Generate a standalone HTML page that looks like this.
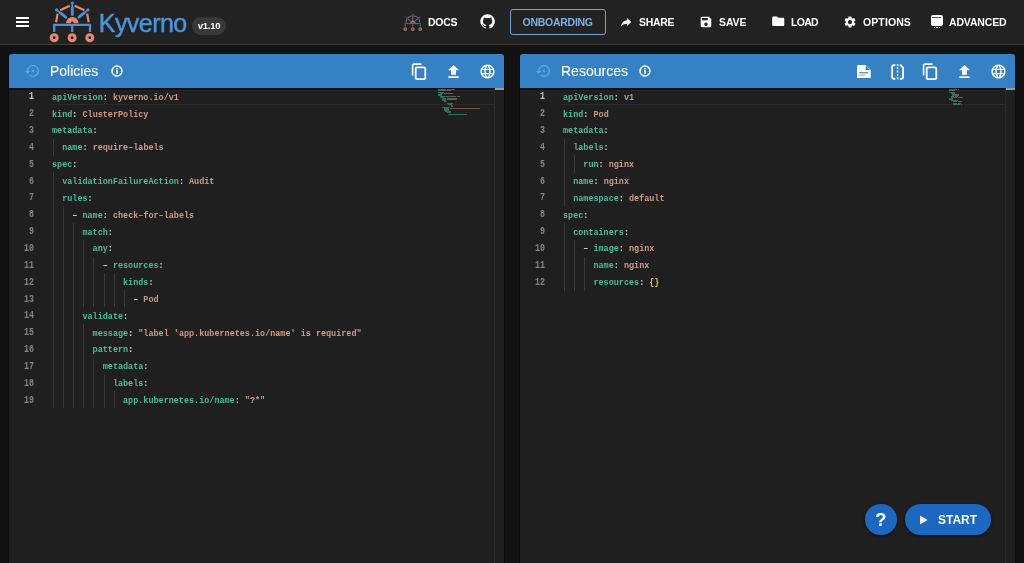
<!DOCTYPE html>
<html><head><meta charset="utf-8"><style>
*{box-sizing:border-box;margin:0;padding:0}
html,body{width:1024px;height:563px;overflow:hidden;background:#121212;font-family:"Liberation Sans",sans-serif}
.abs{position:absolute}
.hdr{position:absolute;left:0;top:0;width:1024px;height:45px;background:#222222;border-bottom:1px solid #3a3a3a}
.nav{position:absolute;top:0;height:44px;color:#fff;font-weight:bold;font-size:10.5px;letter-spacing:0.1px;line-height:44px;white-space:nowrap}
.panel{position:absolute;top:54px;height:509px;background:#1f1f1f;border-radius:3px 3px 0 0;overflow:hidden;box-shadow:0 0 0 1px #0c0c0c}
.ph{position:absolute;left:0;top:0;right:0;height:34.2px;background:#3581c4}
.sh{position:absolute;left:0;right:0;top:34.2px;height:1.4px;background:#0c0f14}
.pt{position:absolute;top:0;line-height:35px;color:#fff;font-size:14px;-webkit-text-stroke:0.1px #fff}
.sb{position:absolute;top:35px;bottom:0;width:10.5px;border-left:1px solid #2a2a2a;background:#1f1f1f}
.sbt{position:absolute;top:34.3px;height:1.7px;width:9.5px;background:#9a9a9a}
.codewrap{position:absolute;font-family:"Liberation Mono",monospace;font-weight:bold;font-size:9.8px;transform-origin:0 0;transform:scaleX(0.8630952380952381)}
.cl{height:16.855px;line-height:16.855px;white-space:pre}
.ln{position:absolute;font-family:"Liberation Mono",monospace;font-weight:bold;font-size:10.6px;color:#858585;text-align:right;width:26px;height:16.855px;line-height:16.855px;transform-origin:100% 0;transform:scaleX(0.7861635220125787)}
.ln.act{color:#c6c6c6}
.hl{border-top:1px solid #262626;border-bottom:1px solid #2b2b2b}
.g{width:1px;background:#3a3a3a}
.mm{height:1.2px;opacity:0.7}
.k2{background:#3a8f7e}.s2{background:#9a6c5a}
.k{color:#4dba9c}.s{color:#cc9a82}.p{color:#d4d4d4}.b{color:#dcc36a}
</style></head>
<body><div id="root" style="position:absolute;left:0;top:0;width:1024px;height:563px;will-change:transform">
<div class="hdr"></div>
<div class="abs" style="left:16px;top:17px;width:13px;height:2px;background:#fff"></div>
<div class="abs" style="left:16px;top:21px;width:13px;height:2px;background:#fff"></div>
<div class="abs" style="left:16px;top:25px;width:13px;height:2px;background:#fff"></div>
<svg class="abs" style="left:0;top:0" width="120" height="44"><g transform="translate(50,0) scale(1) translate(-50,0)"><line x1="56.1" y1="22.3" x2="57.6" y2="13.6" stroke="#e8876d" stroke-width="2.2" /><line x1="60.2" y1="10.3" x2="69.8" y2="5.8" stroke="#e8876d" stroke-width="2.2" /><line x1="74.6" y1="5.8" x2="84.4" y2="10.3" stroke="#e8876d" stroke-width="2.2" /><line x1="87.2" y1="13.6" x2="88.7" y2="22.3" stroke="#e8876d" stroke-width="2.2" /><path d="M66.1 23.2 A6.2 6.2 0 0 1 78.5 23.2 L73.9 23.2 A1.6 1.6 0 0 0 70.7 23.2 Z" fill="#e8876d"/><line x1="72.30" y1="2.40" x2="72.30" y2="7.78" stroke="#4a90d6" stroke-width="1.5" stroke-linecap="round"/><line x1="72.30" y1="7.78" x2="72.30" y2="14.60" stroke="#4a90d6" stroke-width="2.9" stroke-linecap="round"/><circle cx="72.30" cy="3.00" r="1.6" fill="#4a90d6"/><line x1="56.20" y1="9.60" x2="60.40" y2="12.96" stroke="#4a90d6" stroke-width="1.5" stroke-linecap="round"/><line x1="60.40" y1="12.96" x2="65.73" y2="17.23" stroke="#4a90d6" stroke-width="2.9" stroke-linecap="round"/><circle cx="56.67" cy="9.97" r="1.6" fill="#4a90d6"/><line x1="88.40" y1="9.60" x2="84.20" y2="12.96" stroke="#4a90d6" stroke-width="1.5" stroke-linecap="round"/><line x1="84.20" y1="12.96" x2="78.87" y2="17.23" stroke="#4a90d6" stroke-width="2.9" stroke-linecap="round"/><circle cx="87.93" cy="9.97" r="1.6" fill="#4a90d6"/><path d="M54.2 32 V24.8 H90 V32 M72.2 24.8 V32" stroke="#4a90d6" stroke-width="2.3" fill="none"/><circle cx="54.2" cy="37.7" r="4.5" fill="#e8876d"/><circle cx="54.2" cy="37.7" r="1.4" fill="#1a1a1a"/><circle cx="72.1" cy="37.7" r="4.5" fill="#e8876d"/><circle cx="72.1" cy="37.7" r="1.4" fill="#1a1a1a"/><circle cx="89.8" cy="37.7" r="4.5" fill="#e8876d"/><circle cx="89.8" cy="37.7" r="1.4" fill="#1a1a1a"/></g></svg>
<div class="abs" style="left:98.8px;top:7px;font-size:25px;letter-spacing:-0.55px;line-height:32px;color:#4b94dc;-webkit-text-stroke:0.45px #4b94dc">Kyverno</div>
<div class="abs" style="left:192px;top:17px;width:34px;height:18px;border-radius:9px;background:#393939;color:#fff;font-size:9.5px;letter-spacing:-0.3px;font-weight:bold;line-height:18px;text-align:center">v1.10</div>
<svg class="abs" style="left:400px;top:10px;opacity:0.75" width="24" height="24"><g transform="translate(3.5,3.2) scale(0.42) translate(-50,0)"><line x1="56.1" y1="22.3" x2="57.6" y2="13.6" stroke="#e8876d" stroke-width="2.2" /><line x1="60.2" y1="10.3" x2="69.8" y2="5.8" stroke="#e8876d" stroke-width="2.2" /><line x1="74.6" y1="5.8" x2="84.4" y2="10.3" stroke="#e8876d" stroke-width="2.2" /><line x1="87.2" y1="13.6" x2="88.7" y2="22.3" stroke="#e8876d" stroke-width="2.2" /><path d="M66.1 23.2 A6.2 6.2 0 0 1 78.5 23.2 L73.9 23.2 A1.6 1.6 0 0 0 70.7 23.2 Z" fill="#e8876d"/><line x1="72.30" y1="2.40" x2="72.30" y2="7.78" stroke="#4a90d6" stroke-width="1.5" stroke-linecap="round"/><line x1="72.30" y1="7.78" x2="72.30" y2="14.60" stroke="#4a90d6" stroke-width="2.9" stroke-linecap="round"/><circle cx="72.30" cy="3.00" r="1.6" fill="#4a90d6"/><line x1="56.20" y1="9.60" x2="60.40" y2="12.96" stroke="#4a90d6" stroke-width="1.5" stroke-linecap="round"/><line x1="60.40" y1="12.96" x2="65.73" y2="17.23" stroke="#4a90d6" stroke-width="2.9" stroke-linecap="round"/><circle cx="56.67" cy="9.97" r="1.6" fill="#4a90d6"/><line x1="88.40" y1="9.60" x2="84.20" y2="12.96" stroke="#4a90d6" stroke-width="1.5" stroke-linecap="round"/><line x1="84.20" y1="12.96" x2="78.87" y2="17.23" stroke="#4a90d6" stroke-width="2.9" stroke-linecap="round"/><circle cx="87.93" cy="9.97" r="1.6" fill="#4a90d6"/><path d="M54.2 32 V24.8 H90 V32 M72.2 24.8 V32" stroke="#4a90d6" stroke-width="2.3" fill="none"/><circle cx="54.2" cy="37.7" r="4.5" fill="#e8876d"/><circle cx="54.2" cy="37.7" r="1.4" fill="#1a1a1a"/><circle cx="72.1" cy="37.7" r="4.5" fill="#e8876d"/><circle cx="72.1" cy="37.7" r="1.4" fill="#1a1a1a"/><circle cx="89.8" cy="37.7" r="4.5" fill="#e8876d"/><circle cx="89.8" cy="37.7" r="1.4" fill="#1a1a1a"/></g></svg>
<div class="nav" style="left:428px;letter-spacing:-0.3px">DOCS</div>
<svg class="abs" style="left:480px;top:13.8px;opacity:1" width="15.2" height="15.2" viewBox="0 0 24 24"><path fill="#fff" d="M12 .5C5.65.5.5 5.65.5 12c0 5.08 3.29 9.39 7.86 10.91.58.1.79-.25.79-.56v-2c-3.2.7-3.87-1.37-3.87-1.37-.53-1.33-1.28-1.69-1.28-1.69-1.04-.71.08-.7.08-.7 1.16.08 1.77 1.19 1.77 1.19 1.03 1.76 2.69 1.25 3.35.96.1-.74.4-1.25.73-1.54-2.55-.29-5.24-1.28-5.24-5.68 0-1.25.45-2.28 1.18-3.08-.12-.29-.51-1.46.11-3.04 0 0 .97-.31 3.17 1.18.92-.26 1.9-.38 2.88-.39.98.01 1.96.13 2.88.39 2.2-1.49 3.17-1.18 3.17-1.18.63 1.58.23 2.75.11 3.04.74.8 1.18 1.83 1.18 3.08 0 4.41-2.69 5.38-5.25 5.67.41.36.78 1.06.78 2.14v3.17c0 .31.21.67.8.56C20.21 21.39 23.5 17.08 23.5 12 23.5 5.65 18.35.5 12 .5z"/></svg>
<div class="abs" style="left:510px;top:9px;width:96px;height:25.5px;border:1.8px solid #74a3d8;border-radius:3px"></div>
<div class="nav" style="left:522.6px;color:#79b0e6;letter-spacing:-0.28px">ONBOARDING</div>
<svg class="abs" style="left:619px;top:15px;opacity:1" width="14" height="14" viewBox="0 0 24 24"><path fill="#fff" d="M14 9V5l7 7-7 7v-4.1c-5 0-8.5 1.6-11 5.1 1-5 4-10 11-11z"/></svg>
<div class="nav" style="left:639px;letter-spacing:-0.3px">SHARE</div>
<svg class="abs" style="left:699px;top:15px;opacity:1" width="14" height="14" viewBox="0 0 24 24"><path fill="#fff" d="M17 3H5c-1.11 0-2 .9-2 2v14c0 1.1.89 2 2 2h14c1.1 0 2-.9 2-2V7l-4-4zm-5 16c-1.66 0-3-1.34-3-3s1.34-3 3-3 3 1.34 3 3-1.34 3-3 3zm3-10H5V5h10v4z"/></svg>
<div class="nav" style="left:719px;letter-spacing:-0.1px">SAVE</div>
<svg class="abs" style="left:770.5px;top:14.3px;opacity:1" width="14.5" height="14.5" viewBox="0 0 24 24"><path fill="#fff" d="M10 4H4c-1.1 0-1.99.9-1.99 2L2 18c0 1.1.9 2 2 2h16c1.1 0 2-.9 2-2V8c0-1.1-.9-2-2-2h-8l-2-2z"/></svg>
<div class="nav" style="left:791px;letter-spacing:-0.7px">LOAD</div>
<svg class="abs" style="left:843px;top:14.5px;opacity:1" width="14" height="14" viewBox="0 0 24 24"><path fill="#fff" d="M19.14 12.94c.04-.3.06-.61.06-.94 0-.32-.02-.64-.07-.94l2.03-1.58c.18-.14.23-.41.12-.61l-1.92-3.32c-.12-.22-.37-.29-.59-.22l-2.39.96c-.5-.38-1.03-.7-1.62-.94l-.36-2.54c-.04-.24-.24-.41-.48-.41h-3.84c-.24 0-.43.17-.47.41l-.36 2.54c-.59.24-1.130.57-1.62.94l-2.39-.96c-.22-.08-.47 0-.59.22L2.74 8.87c-.12.21-.08.47.12.61l2.03 1.58c-.05.3-.09.63-.09.94s.02.64.07.94l-2.03 1.58c-.18.14-.23.41-.12.61l1.92 3.32c.12.22.37.29.59.22l2.39-.96c.5.38 1.03.7 1.62.94l.36 2.54c.05.24.24.41.48.41h3.84c.24 0 .44-.17.47-.41l.36-2.54c.59-.24 1.13-.56 1.62-.94l2.39.96c.22.08.47 0 .59-.22l1.92-3.32c.12-.22.07-.47-.12-.61l-2.01-1.58zM12 15.6c-1.98 0-3.6-1.62-3.6-3.6s1.62-3.6 3.6-3.6 3.6 1.62 3.6 3.6-1.62 3.6-3.6 3.6z"/></svg>
<div class="nav" style="left:863px;letter-spacing:0.1px">OPTIONS</div>
<div class="abs" style="left:930.5px;top:15px;width:12px;height:10.6px;background:#fff;border-radius:2px"></div>
<div class="abs" style="left:932px;top:16.8px;width:9px;height:1.2px;background:#555"></div>
<div class="abs" style="left:933.8px;top:26.6px;width:1.4px;height:1.2px;background:#ddd"></div>
<div class="abs" style="left:936.3px;top:26.6px;width:1.4px;height:1.2px;background:#ddd"></div>
<div class="abs" style="left:938.8px;top:26.6px;width:1.4px;height:1.2px;background:#ddd"></div>
<div class="nav" style="left:949px;letter-spacing:-0.15px">ADVANCED</div>
<div class="panel" style="left:9px;width:495px">
<div class="ph"></div><div class="sh"></div>
<div class="pt" style="left:41px">Policies</div>
<div class="sb" style="left:484.5px"></div><div class="sbt" style="left:485.5px"></div>
</div>
<svg class="abs" style="left:24.8px;top:62.6px;opacity:0.9" width="16" height="16" viewBox="0 0 24 24"><path fill="#67aced" d="M14 12c0-1.1-.9-2-2-2s-2 .9-2 2 .9 2 2 2 2-.9 2-2zm-2-9c-4.97 0-9 4.03-9 9H0l4 4 4-4H5c0-3.87 3.13-7 7-7s7 3.13 7 7-3.13 7-7 7c-1.51 0-2.910-.49-4.06-1.3l-1.42 1.44C8.04 20.3 9.94 21 12 21c4.97 0 9-4.03 9-9s-4.03-9-9-9z"/></svg>
<svg class="abs" style="left:110.7px;top:64.9px" width="12" height="12" viewBox="0 0 12 12"><circle cx="6" cy="6" r="5" fill="none" stroke="#fff" stroke-width="1.5"/><rect x="5.25" y="5" width="1.5" height="3.8" fill="#fff"/><rect x="5.25" y="3" width="1.5" height="1.4" fill="#fff"/></svg>
<svg class="abs" style="left:411.3px;top:62.8px" width="16" height="17" viewBox="0 0 16 17"><path d="M1.6 12.6V2.6Q1.6 1.1 3.1 1.1H10.5" fill="none" stroke="#fff" stroke-width="1.6"/><rect x="4.7" y="4.3" width="9.6" height="11.9" rx="1.5" fill="none" stroke="#fff" stroke-width="1.8"/></svg>
<svg class="abs" style="left:448.0px;top:64.5px" width="11" height="13.5" viewBox="0 0 11 13.5"><path d="M5.5 0L11 5.3H8V9.8H3V5.3H0Z" fill="#fff"/><rect x="0.3" y="11.3" width="10.4" height="2" fill="#fff"/></svg>
<svg class="abs" style="left:478.5px;top:63px;opacity:1" width="17" height="17" viewBox="0 0 24 24"><path fill="#fff" d="M11.99 2C6.47 2 2 6.48 2 12s4.47 10 9.99 10C17.52 22 22 17.520 22 12S17.52 2 11.99 2zm6.93 6h-2.95c-.32-1.25-.78-2.45-1.38-3.56 1.84.63 3.37 1.91 4.33 3.56zM12 4.04c.83 1.2 1.48 2.53 1.91 3.96h-3.82c.43-1.43 1.08-2.76 1.91-3.96zM4.26 14C4.1 13.36 4 12.69 4 12s.1-1.36.26-2h3.38c-.08.66-.14 1.32-.14 2 0 .68.06 1.34.14 2H4.26zm.82 2h2.95c.32 1.25.78 2.45 1.38 3.56-1.84-.63-3.37-1.9-4.330-3.56zm2.95-8H5.08c.96-1.66 2.49-2.93 4.33-3.56C8.81 5.55 8.35 6.75 8.03 8zM12 19.96c-.83-1.2-1.48-2.53-1.91-3.96h3.82c-.43 1.43-1.08 2.76-1.91 3.96zM14.34 14H9.66c-.09-.66-.16-1.32-.16-2 0-.68.07-1.35.16-2h4.68c.09.65.16 1.32.16 2 0 .68-.07 1.34-.16 2zm.25 5.56c.6-1.11 1.06-2.31 1.38-3.56h2.95c-.96 1.65-2.49 2.93-4.33 3.56zM16.36 14c.08-.66.14-1.32.14-2 0-.68-.06-1.34-.14-2h3.38c.16.64.26 1.31.26 2s-.1 1.36-.26 2h-3.38z"/></svg>
<div class="abs hl" style="left:50.3px;top:89.8px;width:443.7px;height:15.4px"></div>
<div class="abs g" style="left:52.80px;top:138.51px;height:17.16px"></div>
<div class="abs g" style="left:52.80px;top:172.23px;height:17.16px"></div>
<div class="abs g" style="left:52.80px;top:189.08px;height:17.16px"></div>
<div class="abs g" style="left:52.80px;top:205.94px;height:17.16px"></div>
<div class="abs g" style="left:62.95px;top:205.94px;height:17.16px"></div>
<div class="abs g" style="left:52.80px;top:222.79px;height:17.16px"></div>
<div class="abs g" style="left:62.95px;top:222.79px;height:17.16px"></div>
<div class="abs g" style="left:73.10px;top:222.79px;height:17.16px"></div>
<div class="abs g" style="left:52.80px;top:239.64px;height:17.16px"></div>
<div class="abs g" style="left:62.95px;top:239.64px;height:17.16px"></div>
<div class="abs g" style="left:73.10px;top:239.64px;height:17.16px"></div>
<div class="abs g" style="left:83.25px;top:239.64px;height:17.16px"></div>
<div class="abs g" style="left:52.80px;top:256.50px;height:17.16px"></div>
<div class="abs g" style="left:62.95px;top:256.50px;height:17.16px"></div>
<div class="abs g" style="left:73.10px;top:256.50px;height:17.16px"></div>
<div class="abs g" style="left:83.25px;top:256.50px;height:17.16px"></div>
<div class="abs g" style="left:93.40px;top:256.50px;height:17.16px"></div>
<div class="abs g" style="left:52.80px;top:273.36px;height:17.16px"></div>
<div class="abs g" style="left:62.95px;top:273.36px;height:17.16px"></div>
<div class="abs g" style="left:73.10px;top:273.36px;height:17.16px"></div>
<div class="abs g" style="left:83.25px;top:273.36px;height:17.16px"></div>
<div class="abs g" style="left:93.40px;top:273.36px;height:17.16px"></div>
<div class="abs g" style="left:103.55px;top:273.36px;height:17.16px"></div>
<div class="abs g" style="left:113.70px;top:273.36px;height:17.16px"></div>
<div class="abs g" style="left:52.80px;top:290.21px;height:17.16px"></div>
<div class="abs g" style="left:62.95px;top:290.21px;height:17.16px"></div>
<div class="abs g" style="left:73.10px;top:290.21px;height:17.16px"></div>
<div class="abs g" style="left:83.25px;top:290.21px;height:17.16px"></div>
<div class="abs g" style="left:93.40px;top:290.21px;height:17.16px"></div>
<div class="abs g" style="left:103.55px;top:290.21px;height:17.16px"></div>
<div class="abs g" style="left:113.70px;top:290.21px;height:17.16px"></div>
<div class="abs g" style="left:123.85px;top:290.21px;height:17.16px"></div>
<div class="abs g" style="left:52.80px;top:307.06px;height:17.16px"></div>
<div class="abs g" style="left:62.95px;top:307.06px;height:17.16px"></div>
<div class="abs g" style="left:73.10px;top:307.06px;height:17.16px"></div>
<div class="abs g" style="left:52.80px;top:323.92px;height:17.16px"></div>
<div class="abs g" style="left:62.95px;top:323.92px;height:17.16px"></div>
<div class="abs g" style="left:73.10px;top:323.92px;height:17.16px"></div>
<div class="abs g" style="left:83.25px;top:323.92px;height:17.16px"></div>
<div class="abs g" style="left:52.80px;top:340.78px;height:17.16px"></div>
<div class="abs g" style="left:62.95px;top:340.78px;height:17.16px"></div>
<div class="abs g" style="left:73.10px;top:340.78px;height:17.16px"></div>
<div class="abs g" style="left:83.25px;top:340.78px;height:17.16px"></div>
<div class="abs g" style="left:52.80px;top:357.63px;height:17.16px"></div>
<div class="abs g" style="left:62.95px;top:357.63px;height:17.16px"></div>
<div class="abs g" style="left:73.10px;top:357.63px;height:17.16px"></div>
<div class="abs g" style="left:83.25px;top:357.63px;height:17.16px"></div>
<div class="abs g" style="left:93.40px;top:357.63px;height:17.16px"></div>
<div class="abs g" style="left:52.80px;top:374.49px;height:17.16px"></div>
<div class="abs g" style="left:62.95px;top:374.49px;height:17.16px"></div>
<div class="abs g" style="left:73.10px;top:374.49px;height:17.16px"></div>
<div class="abs g" style="left:83.25px;top:374.49px;height:17.16px"></div>
<div class="abs g" style="left:93.40px;top:374.49px;height:17.16px"></div>
<div class="abs g" style="left:103.55px;top:374.49px;height:17.16px"></div>
<div class="abs g" style="left:52.80px;top:391.34px;height:17.16px"></div>
<div class="abs g" style="left:62.95px;top:391.34px;height:17.16px"></div>
<div class="abs g" style="left:73.10px;top:391.34px;height:17.16px"></div>
<div class="abs g" style="left:83.25px;top:391.34px;height:17.16px"></div>
<div class="abs g" style="left:93.40px;top:391.34px;height:17.16px"></div>
<div class="abs g" style="left:103.55px;top:391.34px;height:17.16px"></div>
<div class="abs g" style="left:113.70px;top:391.34px;height:17.16px"></div>
<div class="ln act" style="left:8.4px;top:88.25px">1</div>
<div class="ln" style="left:8.4px;top:105.11px">2</div>
<div class="ln" style="left:8.4px;top:121.96px">3</div>
<div class="ln" style="left:8.4px;top:138.81px">4</div>
<div class="ln" style="left:8.4px;top:155.67px">5</div>
<div class="ln" style="left:8.4px;top:172.53px">6</div>
<div class="ln" style="left:8.4px;top:189.38px">7</div>
<div class="ln" style="left:8.4px;top:206.24px">8</div>
<div class="ln" style="left:8.4px;top:223.09px">9</div>
<div class="ln" style="left:8.4px;top:239.94px">10</div>
<div class="ln" style="left:8.4px;top:256.80px">11</div>
<div class="ln" style="left:8.4px;top:273.66px">12</div>
<div class="ln" style="left:8.4px;top:290.51px">13</div>
<div class="ln" style="left:8.4px;top:307.37px">14</div>
<div class="ln" style="left:8.4px;top:324.22px">15</div>
<div class="ln" style="left:8.4px;top:341.08px">16</div>
<div class="ln" style="left:8.4px;top:357.93px">17</div>
<div class="ln" style="left:8.4px;top:374.79px">18</div>
<div class="ln" style="left:8.4px;top:391.64px">19</div>
<div class="codewrap" style="left:52.30px;top:89.75px">
<div class="cl"><span class="k">apiVersion</span><span class="p">:</span> <span class="s">kyverno.io/v1</span></div>
<div class="cl"><span class="k">kind</span><span class="p">:</span> <span class="s">ClusterPolicy</span></div>
<div class="cl"><span class="k">metadata</span><span class="p">:</span></div>
<div class="cl">  <span class="k">name</span><span class="p">:</span> <span class="s">require–labels</span></div>
<div class="cl"><span class="k">spec</span><span class="p">:</span></div>
<div class="cl">  <span class="k">validationFailureAction</span><span class="p">:</span> <span class="s">Audit</span></div>
<div class="cl">  <span class="k">rules</span><span class="p">:</span></div>
<div class="cl">    <span class="p">– </span><span class="k">name</span><span class="p">:</span> <span class="s">check–for–labels</span></div>
<div class="cl">      <span class="k">match</span><span class="p">:</span></div>
<div class="cl">        <span class="k">any</span><span class="p">:</span></div>
<div class="cl">          <span class="p">– </span><span class="k">resources</span><span class="p">:</span></div>
<div class="cl">              <span class="k">kinds</span><span class="p">:</span></div>
<div class="cl">                <span class="p">– </span><span class="s">Pod</span></div>
<div class="cl">      <span class="k">validate</span><span class="p">:</span></div>
<div class="cl">        <span class="k">message</span><span class="p">:</span> <span class="s">&quot;label &#x27;app.kubernetes.io/name&#x27; is required&quot;</span></div>
<div class="cl">        <span class="k">pattern</span><span class="p">:</span></div>
<div class="cl">          <span class="k">metadata</span><span class="p">:</span></div>
<div class="cl">            <span class="k">labels</span><span class="p">:</span></div>
<div class="cl">              <span class="k">app.kubernetes.io/name</span><span class="p">:</span> <span class="s">&quot;?*&quot;</span></div>
</div>
<div class="abs mm k2" style="left:438.30px;top:88.90px;width:7.52px"></div>
<div class="abs mm s2" style="left:446.51px;top:88.90px;width:8.89px"></div>
<div class="abs mm k2" style="left:438.30px;top:90.27px;width:3.42px"></div>
<div class="abs mm s2" style="left:442.40px;top:90.27px;width:8.89px"></div>
<div class="abs mm k2" style="left:438.30px;top:91.64px;width:6.16px"></div>
<div class="abs mm k2" style="left:439.67px;top:93.01px;width:3.42px"></div>
<div class="abs mm s2" style="left:443.77px;top:93.01px;width:9.58px"></div>
<div class="abs mm k2" style="left:438.30px;top:94.38px;width:3.42px"></div>
<div class="abs mm k2" style="left:439.67px;top:95.75px;width:16.42px"></div>
<div class="abs mm s2" style="left:456.77px;top:95.75px;width:3.42px"></div>
<div class="abs mm k2" style="left:439.67px;top:97.12px;width:4.10px"></div>
<div class="abs mm k2" style="left:442.40px;top:98.49px;width:3.42px"></div>
<div class="abs mm s2" style="left:446.51px;top:98.49px;width:10.94px"></div>
<div class="abs mm k2" style="left:442.40px;top:99.86px;width:4.10px"></div>
<div class="abs mm k2" style="left:443.77px;top:101.23px;width:2.74px"></div>
<div class="abs mm k2" style="left:446.51px;top:102.60px;width:6.84px"></div>
<div class="abs mm k2" style="left:447.88px;top:103.97px;width:4.10px"></div>
<div class="abs mm s2" style="left:450.61px;top:105.34px;width:2.05px"></div>
<div class="abs mm k2" style="left:442.40px;top:106.71px;width:6.16px"></div>
<div class="abs mm k2" style="left:443.77px;top:108.08px;width:5.47px"></div>
<div class="abs mm s2" style="left:449.93px;top:108.08px;width:30.10px"></div>
<div class="abs mm k2" style="left:443.77px;top:109.45px;width:5.47px"></div>
<div class="abs mm k2" style="left:445.14px;top:110.82px;width:6.16px"></div>
<div class="abs mm k2" style="left:446.51px;top:112.19px;width:4.79px"></div>
<div class="abs mm k2" style="left:447.88px;top:113.56px;width:15.73px"></div>
<div class="abs mm s2" style="left:464.29px;top:113.56px;width:2.74px"></div>
<div class="panel" style="left:520px;width:495px">
<div class="ph"></div><div class="sh"></div>
<div class="pt" style="left:41px">Resources</div>
<div class="sb" style="left:484.5px"></div><div class="sbt" style="left:485.5px"></div>
</div>
<svg class="abs" style="left:535.8px;top:62.6px;opacity:0.9" width="16" height="16" viewBox="0 0 24 24"><path fill="#67aced" d="M14 12c0-1.1-.9-2-2-2s-2 .9-2 2 .9 2 2 2 2-.9 2-2zm-2-9c-4.97 0-9 4.03-9 9H0l4 4 4-4H5c0-3.87 3.13-7 7-7s7 3.13 7 7-3.13 7-7 7c-1.51 0-2.910-.49-4.06-1.3l-1.42 1.44C8.04 20.3 9.94 21 12 21c4.97 0 9-4.03 9-9s-4.03-9-9-9z"/></svg>
<svg class="abs" style="left:638.7px;top:64.9px" width="12" height="12" viewBox="0 0 12 12"><circle cx="6" cy="6" r="5" fill="none" stroke="#fff" stroke-width="1.5"/><rect x="5.25" y="5" width="1.5" height="3.8" fill="#fff"/><rect x="5.25" y="3" width="1.5" height="1.4" fill="#fff"/></svg>
<svg class="abs" style="left:856.6px;top:64.6px" width="14" height="13.6" viewBox="0 0 14 13.6"><path d="M1.4 0H8.6L13.7 5.1V12.2Q13.7 13.4 12.4 13.4H1.4Q0 13.4 0 12V1.4Q0 0 1.4 0Z" fill="#fff"/><path d="M8.6 0.6V5.1H13.1Z" fill="#3581c4"/><rect x="2.2" y="7.3" width="9" height="1" fill="#3d6a98"/><rect x="2.2" y="9.6" width="6" height="1" fill="#8ea6c0"/></svg>
<svg class="abs" style="left:890.6px;top:63.6px" width="13.2" height="16" viewBox="0 0 14 16" preserveAspectRatio="none"><path d="M4.6 1.3H2.6Q1.2 1.3 1.2 2.7V13.3Q1.2 14.7 2.6 14.7H4.6M9.4 1.3H10.4L12.8 3.7V13.3Q12.8 14.7 11.4 14.7H9.4" fill="none" stroke="#fff" stroke-width="1.9"/><path d="M7 0V16" stroke="#fff" stroke-width="1.6" stroke-dasharray="2 1.3"/></svg>
<svg class="abs" style="left:922.3px;top:62.8px" width="16" height="17" viewBox="0 0 16 17"><path d="M1.6 12.6V2.6Q1.6 1.1 3.1 1.1H10.5" fill="none" stroke="#fff" stroke-width="1.6"/><rect x="4.7" y="4.3" width="9.6" height="11.9" rx="1.5" fill="none" stroke="#fff" stroke-width="1.8"/></svg>
<svg class="abs" style="left:959.0px;top:64.5px" width="11" height="13.5" viewBox="0 0 11 13.5"><path d="M5.5 0L11 5.3H8V9.8H3V5.3H0Z" fill="#fff"/><rect x="0.3" y="11.3" width="10.4" height="2" fill="#fff"/></svg>
<svg class="abs" style="left:989.5px;top:63px;opacity:1" width="17" height="17" viewBox="0 0 24 24"><path fill="#fff" d="M11.99 2C6.47 2 2 6.48 2 12s4.47 10 9.99 10C17.52 22 22 17.520 22 12S17.52 2 11.99 2zm6.93 6h-2.95c-.32-1.25-.78-2.45-1.38-3.56 1.84.63 3.37 1.91 4.33 3.56zM12 4.04c.83 1.2 1.48 2.53 1.91 3.96h-3.82c.43-1.43 1.08-2.76 1.91-3.96zM4.26 14C4.1 13.36 4 12.69 4 12s.1-1.36.26-2h3.38c-.08.66-.14 1.32-.14 2 0 .68.06 1.34.14 2H4.26zm.82 2h2.95c.32 1.25.78 2.45 1.38 3.56-1.84-.63-3.37-1.9-4.330-3.56zm2.95-8H5.08c.96-1.66 2.49-2.93 4.33-3.56C8.81 5.55 8.35 6.75 8.03 8zM12 19.96c-.83-1.2-1.48-2.53-1.91-3.96h3.82c-.43 1.43-1.08 2.76-1.91 3.96zM14.34 14H9.66c-.09-.66-.16-1.32-.16-2 0-.68.07-1.35.16-2h4.68c.09.65.16 1.32.16 2 0 .68-.07 1.34-.16 2zm.25 5.56c.6-1.11 1.06-2.31 1.38-3.56h2.95c-.96 1.65-2.49 2.93-4.33 3.56zM16.36 14c.08-.66.14-1.32.14-2 0-.68-.06-1.34-.14-2h3.38c.16.64.26 1.31.26 2s-.1 1.36-.26 2h-3.38z"/></svg>
<div class="abs hl" style="left:561.3px;top:89.8px;width:443.7px;height:15.4px"></div>
<div class="abs g" style="left:563.80px;top:138.51px;height:17.16px"></div>
<div class="abs g" style="left:563.80px;top:155.37px;height:17.16px"></div>
<div class="abs g" style="left:573.95px;top:155.37px;height:17.16px"></div>
<div class="abs g" style="left:563.80px;top:172.23px;height:17.16px"></div>
<div class="abs g" style="left:563.80px;top:189.08px;height:17.16px"></div>
<div class="abs g" style="left:563.80px;top:222.79px;height:17.16px"></div>
<div class="abs g" style="left:563.80px;top:239.64px;height:17.16px"></div>
<div class="abs g" style="left:573.95px;top:239.64px;height:17.16px"></div>
<div class="abs g" style="left:563.80px;top:256.50px;height:17.16px"></div>
<div class="abs g" style="left:573.95px;top:256.50px;height:17.16px"></div>
<div class="abs g" style="left:584.10px;top:256.50px;height:17.16px"></div>
<div class="abs g" style="left:563.80px;top:273.36px;height:17.16px"></div>
<div class="abs g" style="left:573.95px;top:273.36px;height:17.16px"></div>
<div class="abs g" style="left:584.10px;top:273.36px;height:17.16px"></div>
<div class="ln act" style="left:519.4px;top:88.25px">1</div>
<div class="ln" style="left:519.4px;top:105.11px">2</div>
<div class="ln" style="left:519.4px;top:121.96px">3</div>
<div class="ln" style="left:519.4px;top:138.81px">4</div>
<div class="ln" style="left:519.4px;top:155.67px">5</div>
<div class="ln" style="left:519.4px;top:172.53px">6</div>
<div class="ln" style="left:519.4px;top:189.38px">7</div>
<div class="ln" style="left:519.4px;top:206.24px">8</div>
<div class="ln" style="left:519.4px;top:223.09px">9</div>
<div class="ln" style="left:519.4px;top:239.94px">10</div>
<div class="ln" style="left:519.4px;top:256.80px">11</div>
<div class="ln" style="left:519.4px;top:273.66px">12</div>
<div class="codewrap" style="left:563.30px;top:89.75px">
<div class="cl"><span class="k">apiVersion</span><span class="p">:</span> <span class="s">v1</span></div>
<div class="cl"><span class="k">kind</span><span class="p">:</span> <span class="s">Pod</span></div>
<div class="cl"><span class="k">metadata</span><span class="p">:</span></div>
<div class="cl">  <span class="k">labels</span><span class="p">:</span></div>
<div class="cl">    <span class="k">run</span><span class="p">:</span> <span class="s">nginx</span></div>
<div class="cl">  <span class="k">name</span><span class="p">:</span> <span class="s">nginx</span></div>
<div class="cl">  <span class="k">namespace</span><span class="p">:</span> <span class="s">default</span></div>
<div class="cl"><span class="k">spec</span><span class="p">:</span></div>
<div class="cl">  <span class="k">containers</span><span class="p">:</span></div>
<div class="cl">    <span class="p">– </span><span class="k">image</span><span class="p">:</span> <span class="s">nginx</span></div>
<div class="cl">      <span class="k">name</span><span class="p">:</span> <span class="s">nginx</span></div>
<div class="cl">      <span class="k">resources</span><span class="p">:</span> <span class="b">{}</span></div>
</div>
<div class="abs mm k2" style="left:949.30px;top:88.90px;width:7.52px"></div>
<div class="abs mm s2" style="left:957.51px;top:88.90px;width:1.37px"></div>
<div class="abs mm k2" style="left:949.30px;top:90.27px;width:3.42px"></div>
<div class="abs mm s2" style="left:953.40px;top:90.27px;width:2.05px"></div>
<div class="abs mm k2" style="left:949.30px;top:91.64px;width:6.16px"></div>
<div class="abs mm k2" style="left:950.67px;top:93.01px;width:4.79px"></div>
<div class="abs mm k2" style="left:952.04px;top:94.38px;width:2.74px"></div>
<div class="abs mm s2" style="left:955.46px;top:94.38px;width:3.42px"></div>
<div class="abs mm k2" style="left:950.67px;top:95.75px;width:3.42px"></div>
<div class="abs mm s2" style="left:954.77px;top:95.75px;width:3.42px"></div>
<div class="abs mm k2" style="left:950.67px;top:97.12px;width:6.84px"></div>
<div class="abs mm s2" style="left:958.19px;top:97.12px;width:4.79px"></div>
<div class="abs mm k2" style="left:949.30px;top:98.49px;width:3.42px"></div>
<div class="abs mm k2" style="left:950.67px;top:99.86px;width:7.52px"></div>
<div class="abs mm k2" style="left:953.40px;top:101.23px;width:4.10px"></div>
<div class="abs mm s2" style="left:958.19px;top:101.23px;width:3.42px"></div>
<div class="abs mm k2" style="left:953.40px;top:102.60px;width:3.42px"></div>
<div class="abs mm s2" style="left:957.51px;top:102.60px;width:3.42px"></div>
<div class="abs mm k2" style="left:953.40px;top:103.97px;width:6.84px"></div>
<div class="abs mm s2" style="left:960.93px;top:103.97px;width:1.37px"></div>
<div class="abs" style="left:865.2px;top:503.6px;width:31.4px;height:31.4px;border-radius:50%;background:#1c68c1;box-shadow:0 1px 3px rgba(0,0,0,.6);color:#fff;font-weight:bold;font-size:19px;line-height:31.4px;text-align:center">?</div>
<div class="abs" style="left:905px;top:504.2px;width:86.3px;height:30.8px;border-radius:16px;background:#1c68c1;box-shadow:0 1px 3px rgba(0,0,0,.6)"></div>
<svg class="abs" style="left:918px;top:513px" width="12" height="14" viewBox="0 0 12 14"><path d="M2 2.5 L9.5 7 L2 11.5Z" fill="#fff"/></svg>
<div class="abs" style="left:938px;top:505.2px;line-height:30.8px;color:#fff;font-weight:bold;font-size:12px;letter-spacing:0px">START</div>
</div></body></html>
